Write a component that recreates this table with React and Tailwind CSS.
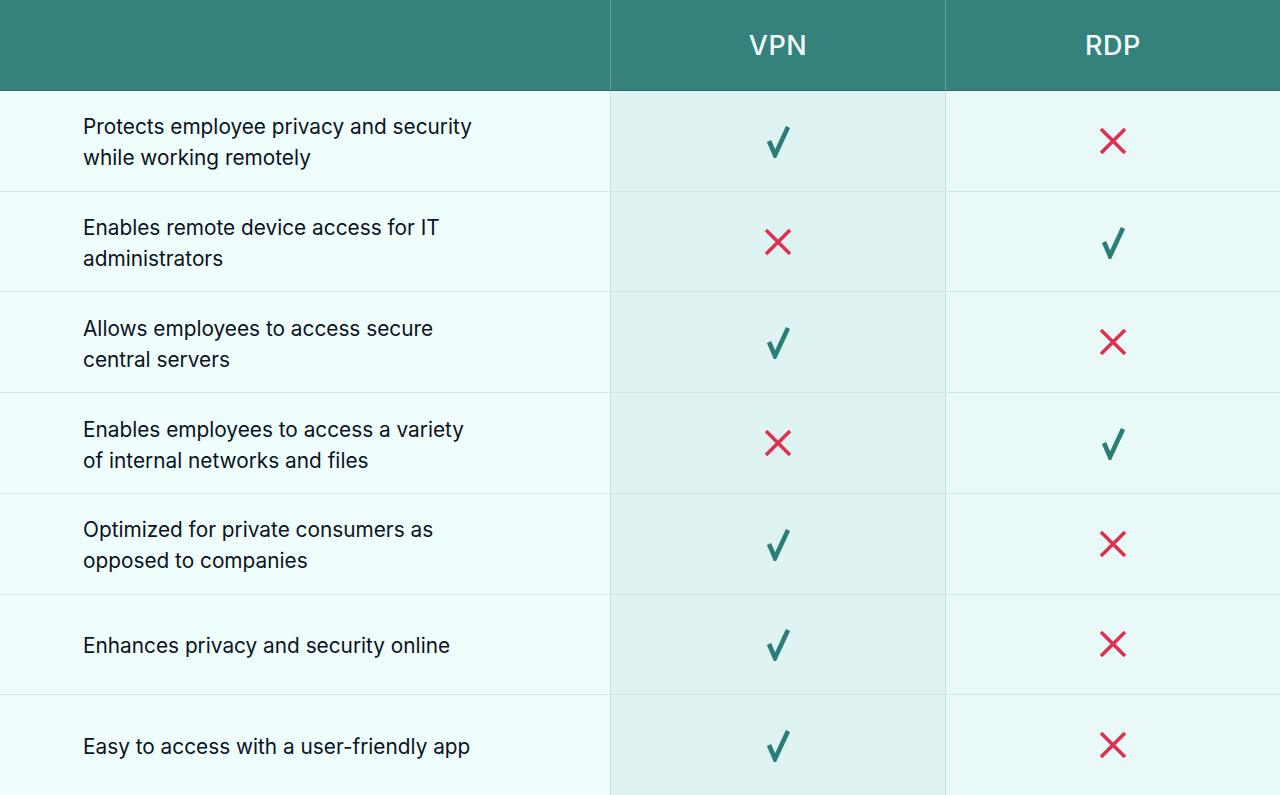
import React from "react";

const rows = [
  { label: ["Protects employee privacy and security", "while working remotely"], vpn: true, rdp: false },
  { label: ["Enables remote device access for IT", "administrators"], vpn: false, rdp: true },
  { label: ["Allows employees to access secure", "central servers"], vpn: true, rdp: false },
  { label: ["Enables employees to access a variety", "of internal networks and files"], vpn: false, rdp: true },
  { label: ["Optimized for private consumers as", "opposed to companies"], vpn: true, rdp: false },
  { label: ["Enhances privacy and security online"], vpn: true, rdp: false },
  { label: ["Easy to access with a user-friendly app"], vpn: true, rdp: false },
];

function Check() {
  return (
    <svg width="26" height="34" viewBox="0 0 26 34" fill="none">
      <polyline
        points="4,17 10,31 23,3"
        stroke="#2a7e77"
        strokeWidth="4.6"
        strokeLinejoin="miter"
        strokeLinecap="butt"
      />
    </svg>
  );
}

function Cross() {
  return (
    <svg width="28" height="28" viewBox="0 0 28 28" fill="none">
      <path d="M2 2 L26 26 M26 2 L2 26" stroke="#e0304f" strokeWidth="3.6" />
    </svg>
  );
}

function Mark({ ok }) {
  return ok ? <Check /> : <Cross />;
}

export default function App() {
  return (
    <div
      className="h-screen w-full flex flex-col overflow-hidden bg-[#f0fdfd]"
      style={{ fontFamily: "Inter, 'Noto Sans', sans-serif" }}
    >
      {/* header */}
      <div className="h-[91px] shrink-0 grid grid-cols-[610px_335px_1fr] bg-[#35827c] border-b border-[#2a716b]">
        <div />
        <div className="border-l border-[#6aa6a0] flex items-center justify-center pt-[3px] text-[27px] font-medium text-[#f2fbfa] tracking-[0.6px]">
          VPN
        </div>
        <div className="border-l border-[#6aa6a0] flex items-center justify-center pt-[3px] text-[27px] font-medium text-[#f2fbfa] tracking-[0.6px]">
          RDP
        </div>
      </div>

      {/* rows */}
      {rows.map((row, i) => (
        <div
          key={i}
          className={`flex-1 grid grid-cols-[610px_335px_1fr] ${
            i < rows.length - 1 ? "border-b border-[#cfe6e3]" : ""
          }`}
        >
          <div className="bg-[#f0fdfd] flex items-center pl-[83px] pt-[3px] text-[20.8px] leading-[31px] text-[#0b1322]">
            <div>
              {row.label.map((l, j) => (
                <div key={j}>{l}</div>
              ))}
            </div>
          </div>
          <div className="bg-[#dff3f3] border-l border-[#c6e0dd] flex items-center justify-center">
            <Mark ok={row.vpn} />
          </div>
          <div className="bg-[#e9f9f8] border-l border-[#c6e0dd] flex items-center justify-center">
            <Mark ok={row.rdp} />
          </div>
        </div>
      ))}
    </div>
  );
}
